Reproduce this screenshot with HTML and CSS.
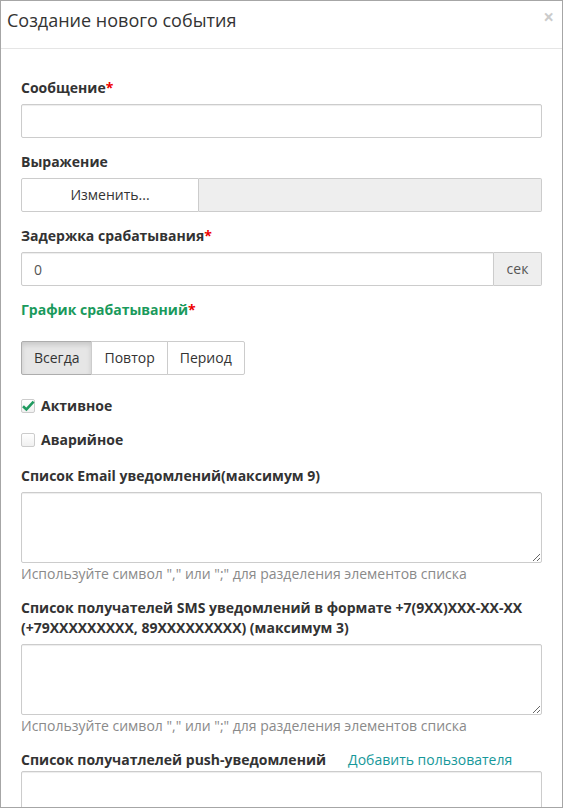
FILE: index.html
```html
<!DOCTYPE html>
<html lang="ru">
  <head>
    <meta charset="UTF-8" />
    <title>Создание нового события</title>
    <link rel="stylesheet" href="styles.css">
  </head>
  <body>
    <div class="modal">
      <div class="modal-header">
        <h4 class="modal-title">Создание нового события</h4>
        <button class="close" type="button">×</button>
      </div>

      <form class="modal-body">
        <div class="form-group">
          <label class="control-label">Сообщение<span class="req">*</span></label>
          <input class="form-control" type="text" />
        </div>

        <div class="form-group">
          <label class="control-label">Выражение</label>
          <div class="input-group">
            <button class="btn btn-change" type="button">Изменить...</button>
            <div class="expr-field"></div>
          </div>
        </div>

        <div class="form-group">
          <label class="control-label">Задержка срабатывания<span class="req">*</span></label>
          <div class="input-group">
            <input class="form-control" type="text" value="0" />
            <span class="addon">сек</span>
          </div>
        </div>

        <div class="form-group">
          <label class="control-label schedule">График срабатываний<span class="req">*</span></label>
          <div class="btn-group">
            <button class="btn active" type="button">Всегда</button>
            <button class="btn" type="button">Повтор</button>
            <button class="btn" type="button">Период</button>
          </div>
        </div>

        <div class="checkbox checkbox-first">
          <span class="check-box">
            <svg width="14" height="14" viewBox="0 0 14 14"><path d="M2 7.2 L5.4 10.4 L12.6 2.6" fill="none" stroke="#1f9a5f" stroke-width="2.6" /></svg>
          </span>
          <span>Активное</span>
        </div>

        <div class="checkbox checkbox-last">
          <span class="check-box"></span>
          <span>Аварийное</span>
        </div>

        <div class="form-group">
          <label class="control-label">Список Email уведомлений(максимум 9)</label>
          <textarea class="form-control"></textarea>
          <p class="help-block">Используйте символ "," или ";" для разделения элементов списка</p>
        </div>

        <div class="form-group">
          <label class="control-label">Список получателей SMS уведомлений в формате +7(9XX)XXX-XX-XX (+79XXXXXXXXX, 89XXXXXXXXX) (максимум 3)</label>
          <textarea class="form-control"></textarea>
          <p class="help-block">Используйте символ "," или ";" для разделения элементов списка</p>
        </div>

        <div class="form-group">
          <div class="label-row">
            <label class="control-label">Список получатлелей push-уведомлений</label>
            <a href="#" class="add-user">Добавить пользователя</a>
          </div>
          <textarea class="form-control"></textarea>
        </div>
      </form>
    </div>
  </body>
</html>
```

FILE: styles.css
```css
* {
  box-sizing: border-box;
}

body {
  margin: 0;
  font-family: 'Open Sans', 'Noto Sans', sans-serif;
  font-size: 14px;
  line-height: 20px;
  color: #333;
  background: #fff;
}

.modal {
  width: 563px;
  height: 808px;
  border: 1px solid #a6a6a6;
  overflow: hidden;
  background: #fff;
}

.modal-header {
  display: flex;
  justify-content: space-between;
  align-items: flex-start;
  padding: 7px 8px 16px 6px;
  border-bottom: 1px solid #e5e5e5;
}

.modal-title {
  margin: 0;
  font-size: 18px;
  font-weight: 400;
  line-height: 24px;
  color: #333;
}

.close {
  padding: 0;
  margin: 0;
  border: none;
  background: none;
  font-family: inherit;
  font-size: 19px;
  font-weight: 700;
  line-height: 18px;
  color: #000;
  opacity: 0.2;
  cursor: pointer;
}

.modal-body {
  display: block;
  padding: 29px 20px 0 20px;
}

.form-group {
  margin-bottom: 14px;
}

.control-label {
  display: block;
  margin-bottom: 6px;
  font-weight: 700;
}

.req {
  color: #e00;
}

.schedule {
  color: #1a9a5c;
  margin-bottom: 21px;
}

.form-control {
  display: block;
  width: 100%;
  height: 34px;
  padding: 6px 12px;
  font-family: inherit;
  font-size: 14px;
  color: #555;
  background: #fff;
  border: 1px solid #ccc;
  border-radius: 2px;
  box-shadow: inset 0 1px 1px rgba(0, 0, 0, 0.075);
}

textarea.form-control {
  height: 71px;
  resize: vertical;
}

.input-group {
  display: flex;
  height: 34px;
}

.input-group .form-control {
  flex: 1;
  border-radius: 2px 0 0 2px;
}

.addon {
  width: 48px;
  display: flex;
  align-items: center;
  justify-content: center;
  background: #eee;
  border: 1px solid #ccc;
  border-left: none;
  border-radius: 0 2px 2px 0;
  color: #555;
}

.btn {
  height: 34px;
  padding: 6px 12px;
  font-family: inherit;
  font-size: 14px;
  line-height: 20px;
  color: #333;
  background: #fff;
  border: 1px solid #ccc;
  cursor: pointer;
}

.btn-change {
  width: 178px;
  border-radius: 2px 0 0 2px;
}

.expr-field {
  flex: 1;
  background: #eee;
  border: 1px solid #ccc;
  border-left: none;
  border-radius: 0 2px 2px 0;
}

.btn-group {
  display: flex;
}

.btn-group .btn + .btn {
  margin-left: -1px;
}

.btn-group .btn:first-child {
  border-radius: 2px 0 0 2px;
}

.btn-group .btn:last-child {
  border-radius: 0 2px 2px 0;
}

.btn.active {
  background: #e6e6e6;
  border-color: #adadad;
  box-shadow: inset 0 3px 5px rgba(0, 0, 0, 0.125);
}

.checkbox {
  display: flex;
  align-items: center;
  gap: 6px;
  margin: 0 0 14px 0;
  font-weight: 700;
}

.checkbox-first {
  margin-top: 21px;
}

.checkbox-last {
  margin-bottom: 16px;
}

.check-box {
  width: 14px;
  height: 14px;
  border: 1px solid #ccc;
  border-radius: 2px;
  background: linear-gradient(#fff, #f0f0f0);
  position: relative;
}

.check-box svg {
  position: absolute;
  left: -1px;
  top: -1px;
}

.help-block {
  margin: 1px 0 0 0;
  color: #8a8a8a;
  line-height: 20px;
}

.label-row {
  display: flex;
  gap: 22px;
}

.label-row .control-label {
  margin-bottom: 1px;
}

.add-user {
  color: #16989a;
  text-decoration: none;
}
```
